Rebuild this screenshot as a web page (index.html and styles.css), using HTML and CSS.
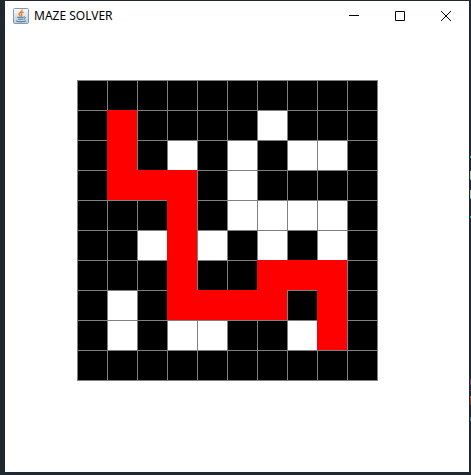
FILE: index.html
```html
<!DOCTYPE html>
<html lang="en">
<head>
<meta charset="utf-8">
<title>MAZE SOLVER</title>
<link rel="stylesheet" href="styles.css">
</head>
<body>
<div class="window">
  <header class="titlebar">
    <svg class="app-icon" viewBox="0 0 16 16" aria-hidden="true">
      <defs>
        <linearGradient id="tile" x1="0" y1="0" x2="0" y2="1">
          <stop offset="0" stop-color="#fafbfc"/>
          <stop offset="1" stop-color="#b9cad8"/>
        </linearGradient>
      </defs>
      <rect x=".5" y=".5" width="15" height="15" rx="1" fill="url(#tile)" stroke="#7f9bb2"/>
      <path d="M9 1.500C9.800 4 5.500 4.500 6 6.300C6.200 7 7.200 7.300 7.200 8.500M10.500 4C8.300 5 7.800 5.700 8.600 6.500C9.100 7.100 8.800 7.800 8.300 8.500" fill="none" stroke="#e8812e" stroke-width="1.400"/>
      <path d="M4 9.300H10.500M5 11.200H10M10.500 9.200C13 8.300 13 10.800 10.500 11.200M3 12.800C5 14.200 11 14.100 13 12.800" fill="none" stroke="#4a7899"/>
    </svg>
    <h1 class="title">MAZE SOLVER</h1>
    <button class="control" type="button" aria-label="Minimize">
      <svg class="glyph" viewBox="0 0 10 10"><path d="M0 4.500H10"/></svg>
    </button>
    <button class="control" type="button" aria-label="Maximize">
      <svg class="glyph" viewBox="0 0 10 10"><path d="M.5 .5H9.500V9.500H.5Z"/></svg>
    </button>
    <button class="control" type="button" aria-label="Close">
      <svg class="glyph" viewBox="0 0 10 10"><path d="M0 0L10 10M10 0L0 10"/></svg>
    </button>
  </header>
  <main class="content">
    <div class="maze" id="maze" role="img" aria-label="Solved maze"></div>
  </main>
</div>
<script src="maze.js"></script>
</body>
</html>
```
FILE: styles.css
```css
* {
  box-sizing: border-box;
}

body {
  display: flex;
  min-height: 100vh;
  margin: 0;
  padding: 1px 2px 3px 5px;
  background-color: #20292f;
  background-image: linear-gradient(
    transparent 156px, #3a8fa5 156px 158px,
    transparent 158px 171px, #b9c4b8 171px 179px, #2bb0d0 179px 180px,
    transparent 180px 190px, #b9c4b8 190px 198px, #2bb0d0 198px 199px,
    transparent 199px 216px, #2b90b0 216px 218px,
    transparent 218px 379px, #70406e 379px 385px,
    transparent 385px 390px, #84458a 390px 391px,
    transparent 391px 396px, #b0683a 396px 398px, #7a3a30 398px 405px,
    transparent 405px 417px, #3d6796 417px 421px,
    transparent 421px);
  background-position: right top;
  background-size: 1px 100%;
  background-repeat: no-repeat;
}

.window {
  flex: 1;
  background: #fff;
}

.titlebar {
  display: flex;
  align-items: center;
  height: 29px;
  padding-left: 8px;
}

.app-icon {
  width: 16px;
  height: 16px;
  margin-right: 5px;
}

.title {
  flex: 1;
  margin: 0;
  color: #000;
  font: 400 12px/16px "Noto Sans", "Open Sans", sans-serif;
}

.control {
  display: flex;
  align-items: center;
  justify-content: center;
  width: 46px;
  height: 29px;
  padding: 0;
  border: 0;
  background: none;
}

.control:hover {
  background: #e5e5e5;
}

.glyph {
  width: 10px;
  height: 10px;
  fill: none;
  stroke: #000;
}

.content {
  padding: 50px 72px;
}

.maze {
  display: grid;
  grid-template-columns: repeat(10, 30px);
  grid-auto-rows: 30px;
  width: max-content;
  border: solid #808080;
  border-width: 0 1px 1px 0;
}

.cell {
  border: solid #808080;
  border-width: 1px 0 0 1px;
}

.wall {
  background: #000;
}

.open {
  background: #fff;
}

.path {
  border-color: #f00;
  background: #f00;
}
```
FILE: maze.js
```js
// "#" is a wall, "." an open cell and "*" a step of the solution.
const rows = [
  "##########",
  "#*####.###",
  "#*#.#.#..#",
  "#***#.####",
  "###*#....#",
  "##.*.#.#.#",
  "###*##***#",
  "#.#****#*#",
  "#.#..##.*#",
  "##########"
];
const kinds = { "#": "wall", ".": "open", "*": "path" };
const maze = document.getElementById("maze");

for (const mark of rows.join("")) {
  const cell = document.createElement("div");
  cell.className = "cell " + kinds[mark];
  maze.append(cell);
}
```
